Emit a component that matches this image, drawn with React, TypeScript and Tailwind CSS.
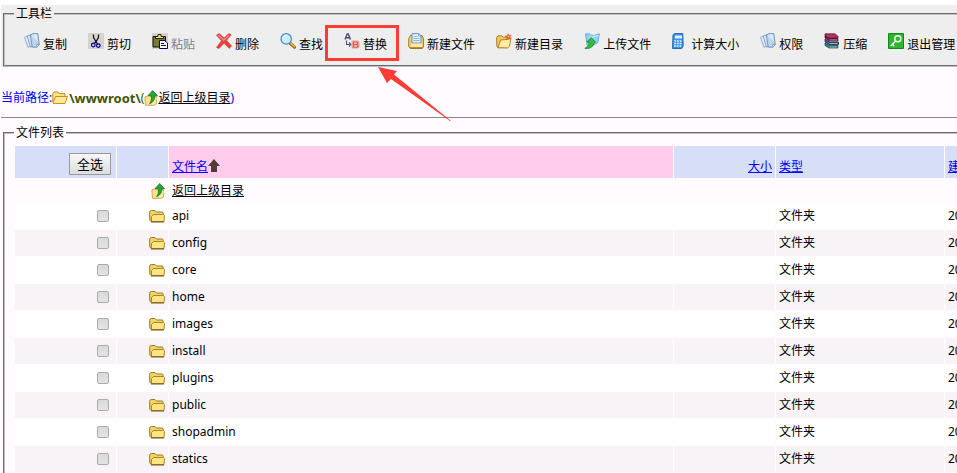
import React from "react";

const svgProps = { width: 16, height: 16, viewBox: "0 0 16 16", className: "block shrink-0", "aria-hidden": true } as const;

const CopyIcon = () => (
  <svg {...svgProps}>
    <path d="M.6 4.500 3.500 2.500l3 10-2.500 2z" fill="#e6eef8" stroke="#7f9cc0" strokeWidth=".8" />
    <path d="M3.200 3.500 7 1.500l2.500 11-3 1.800z" fill="#dbe7f5" stroke="#6f90b8" strokeWidth=".8" />
    <path d="M6.300 2 8.800.6h5l1.500 11-2.300 2.600H8.200z" fill="#bcd4ec" stroke="#5f82ae" strokeWidth=".8" />
    <path d="M8 3 9.500 1.500h3.500l.8 7z" fill="#dceaf7" />
    <path d="m15.300 11.600-2.800-.2.500 2.600z" fill="#f8fbfe" stroke="#5f82ae" strokeWidth=".6" />
  </svg>
);

const CutIcon = () => (
  <svg {...svgProps}>
    <path d="M0 0h16v16H0z" fill="#d6d3ce" />
    <path d="M5.500 1.500v3L8 8.500l1.500 2.500M10.500 1.500v3L8 8.500 6.500 10" fill="none" stroke="#111" strokeWidth="1.200" />
    <path d="M8 8v2" stroke="#00008b" />
    <circle cx="5.300" cy="12" r="1.800" fill="none" stroke="#00008b" strokeWidth="1.200" />
    <circle cx="10.300" cy="12.600" r="1.800" fill="none" stroke="#00008b" strokeWidth="1.200" />
  </svg>
);

const PasteIcon = () => (
  <svg {...svgProps}>
    <path d="M0 0h16v16H0z" fill="#d6d3ce" />
    <path d="M1 3.500h12.500v10.500H1z" fill="#7b7b39" stroke="#111" />
    <path d="M3.500 5.500v-2H6V1.600h3v1.900h2.500v2z" fill="#f1ec6c" stroke="#111" strokeWidth=".9" />
    <path d="M7.500 7.500h5l3 2.500v5.500h-8z" fill="#fff" stroke="#00007b" />
    <path d="M9 10.500h3M9 12.500h5" stroke="#00007b" />
  </svg>
);

const DeleteIcon = () => (
  <svg {...svgProps}>
    <path d="m.5 2.300 2.700-1.700L8 5 12.800.6l2.400 1.200-4.700 5.500 5.100 5.700-2.400 2.400L8 10.200l-5 5.400-2.500-1.200 5-6.600z" fill="#e5403c" stroke="#c03a3a" strokeWidth=".6" />
    <path d="M2.300 2.300 7.800 7.100l5.200-5" fill="none" stroke="#f59a96" strokeWidth="1.200" />
  </svg>
);

const FindIcon = () => (
  <svg {...svgProps}>
    <path d="m10 10 4.500 4.200" stroke="#9a6a14" strokeWidth="3.200" strokeLinecap="round" />
    <path d="m10.500 9.800 4 3.900" stroke="#f4b73c" strokeWidth="1.500" strokeLinecap="round" />
    <circle cx="6.200" cy="5.900" r="5.200" fill="#c6edfb" stroke="#3f86d0" strokeWidth="1.200" />
    <path d="M3 5.800A3.400 3.400 0 0 1 6.500 2.500" fill="none" stroke="#fff" strokeWidth="1.500" />
  </svg>
);

const ReplaceIcon = () => (
  <svg {...svgProps}>
    <path d="M1 6.500 3.200 1h1.100L6.500 6.500M2.200 4.800h3.300" fill="none" stroke="#454b74" strokeWidth="1.400" />
    <path d="M2.500 7.500v4h3.500M5 9.500l1.900 2L5 13.500" fill="none" stroke="#45587e" strokeWidth="1.100" />
    <path d="M7.500 7.500H14L15.500 9v5l-1.500 1.500H7.500z" fill="#efa090" />
    <path d="M9.500 9v5.300h3c2 0 2-2.700 0-2.700h-3 2.800c1.700 0 1.700-2.600 0-2.600z" fill="#f5c3b8" stroke="#cb6559" strokeWidth="1.100" />
  </svg>
);

const NewFileIcon = () => (
  <svg {...svgProps}>
    <path d="M.7 5.500 2.500 2.500H14l1.500 3.500v8l-1 1H2L.7 13.500z" fill="#f4cf6d" stroke="#ad7a23" />
    <path d="M4 .6h7L13 3v7H4z" fill="#e8f4ff" stroke="#4d87c7" strokeWidth=".9" />
    <path d="M10.500.6V3H13M5.500 3.500h4M5.500 5.500h6M5.500 7.500h6" fill="none" stroke="#6da5dc" strokeWidth=".8" />
    <path d="M3 10.500h11V14H3z" fill="#ffe9a2" />
    <path d="M2 15.200h12.500" stroke="#805716" />
  </svg>
);

const NewFolderIcon = () => (
  <svg {...svgProps}>
    <path d="M.6 4.500 1.800 2.800h4L7.200 4.200H12V13l-1.500 1.700H2L.8 13.500z" fill="#efc75c" stroke="#a4792a" strokeWidth=".9" />
    <path d="M2 14.700 4.500 7l8-.7 2.500-1.300-1.500 8.200-1.800 1.700z" fill="#ffec9f" stroke="#a4792a" strokeWidth=".9" />
    <path d="m12 0 1 2.200 2.700-.4-1.600 2.100 1 2.200-2.500-.7-2.200 1.500.2-2.500-2-1.300 2.500-.6z" fill="#ef4f24" />
    <circle cx="12.300" cy="3.500" r="1" fill="#ffe14e" />
  </svg>
);

const UploadIcon = () => (
  <svg {...svgProps}>
    <path d="M1.500.8h4l1.300 1.400 3 .4L15.500.8 13.500 10 9 12H3z" fill="#8fd2f6" stroke="#58a9dc" strokeWidth=".9" />
    <path d="M4 11 6 4l9-1.500" fill="none" stroke="#d1f1ff" />
    <path d="M7 4.500 11.500 9 9.700 10.400C9 14.500 5 16 .8 15.300 4 14 5 12 5 9.200L2.800 9z" fill="#38bb3d" stroke="#168225" strokeWidth=".8" />
  </svg>
);

const CalculatorIcon = () => (
  <svg {...svgProps}>
    <path d="M1 1.800 2.800.5h8l.4 12.500-1.500 2.500H.5z" fill="#3a91e3" stroke="#1762b1" strokeWidth=".9" />
    <path d="M3 2.500h7v3H2.800z" fill="#d8f3ff" />
    <path d="M2.300 8H9.800M2.200 10.500h7.500M2 13h7.500" stroke="#e3f5ff" strokeWidth="1.400" strokeDasharray="1.800 .9" />
  </svg>
);

const CompressIcon = () => (
  <svg {...svgProps}>
    <path d="M0 0h16v16H0z" fill="#f6f6f6" />
    <path d="M1 .8h10l3.500 3-1 1.200H5L1 3z" fill="#b73262" stroke="#3d1022" strokeWidth=".7" />
    <path d="m1 3 4 2.500h9V8H5L1 5z" fill="#7d1d42" stroke="#280a18" strokeWidth=".7" />
    <path d="m1 6 4 3h9.500v2.500H5L1 9z" fill="#4a50a4" stroke="#171733" strokeWidth=".7" />
    <path d="m1 10 4 2.500h9V15H5l-4-2.500z" fill="#2a8b7b" stroke="#0b3532" strokeWidth=".7" />
    <path d="M5.500 7h8M5.500 10.500h8M5.500 14h8" stroke="#dce8ea" strokeWidth=".6" />
  </svg>
);

const ExitIcon = () => (
  <svg {...svgProps}>
    <path d="M.5.5h15v15H.5z" fill="#2fb52f" stroke="#0b8a17" />
    <circle cx="9.800" cy="5.800" r="3" fill="none" stroke="#f4fff2" strokeWidth="1.500" />
    <path d="m7.700 8-5 5M4.300 11.300l1.800 1.800" stroke="#f4fff2" strokeWidth="1.500" />
  </svg>
);

const FolderIcon = () => (
  <svg {...svgProps}>
    <path d="M.6 4.500Q.8 2.500 2.200 2.500H6L7.500 4H13q1.200 0 1.200 1.500V12l-.7 1.500H2L.8 12z" fill="#f5d264" stroke="#9b7927" />
    <path d="M2.500 13.500v-5L4.500 6.500h10l1 1-.5 6z" fill="#fde584" stroke="#a8842c" />
    <path d="M2 14h13" stroke="#745718" />
  </svg>
);

const OpenFolderIcon = () => (
  <svg {...svgProps}>
    <path d="M.8 12V3.500L2 2h4l1.200 1.500H13V6" fill="#fbe08a" stroke="#c6911f" />
    <path d="m1 13 2.500-6.500h12L13 13.500H1.500z" fill="#ffe997" stroke="#c6911f" />
  </svg>
);

const UpIcon = () => (
  <svg {...svgProps} width="14" viewBox="0 0 14 16">
    <path d="M.8 7 5 5.500l2 1.300 5.500-.5V14L10 15.300H1.500z" fill="#fbe18a" stroke="#c39a3d" strokeWidth=".8" />
    <path d="M4 14 6 9l7-1-2 6.500z" fill="#ffedaa" />
    <path d="m8.700.5 4.800 5.200h-2.700c.2 4-1.700 6.800-5.300 8 1.700-2.400 2.200-4.700 1.800-8H4z" fill="#2ba532" stroke="#08701c" strokeWidth=".7" />
  </svg>
);

const tools = [
  { label: "复制", Icon: CopyIcon },
  { label: "剪切", Icon: CutIcon },
  { label: "粘贴", Icon: PasteIcon, disabled: true },
  { label: "删除", Icon: DeleteIcon },
  { label: "查找", Icon: FindIcon },
  { label: "替换", Icon: ReplaceIcon, highlighted: true },
  { label: "新建文件", Icon: NewFileIcon },
  { label: "新建目录", Icon: NewFolderIcon },
  { label: "上传文件", Icon: UploadIcon },
  { label: "计算大小", Icon: CalculatorIcon },
  { label: "权限", Icon: CopyIcon },
  { label: "压缩", Icon: CompressIcon },
  { label: "退出管理", Icon: ExitIcon },
];

const folders = ["api", "config", "core", "home", "images", "install", "plugins", "public", "shopadmin", "statics"];

function Highlight() {
  return (
    <span className="pointer-events-none absolute -left-[19px] -top-2 h-9 w-[74px] border-3 border-[#ff3b36]" aria-hidden="true">
      <svg className="absolute left-[50px] top-[39px]" width="74" height="56" viewBox="0 0 74 56">
        <path d="M0 0 19 4 16 7.500 73 54 72 54 13 12 9 16z" fill="#ff3b36" />
      </svg>
    </span>
  );
}

export default function App() {
  return (
    <div className="overflow-x-hidden bg-[#fffbff] font-['Noto_Sans','Noto_Sans_CJK_SC',sans-serif] text-xs leading-4 text-black">
      <div className="min-w-[1200px] border-t-5 border-white pl-px">
        <header className="bg-[#eee] pt-px pl-0.5">
          <fieldset className="border-2 border-[#c0c0c0] pb-3 pl-[19px] [border-style:groove]">
            <legend className="-ml-[10px] px-0.5">工具栏</legend>
            <div className="flex gap-[21px] pt-[11px] whitespace-nowrap">
              {tools.map(({ label, Icon, disabled, highlighted }) => (
                <button key={label} type="button" disabled={disabled} className="relative flex items-start gap-[3px] disabled:text-[#808080]">
                  <Icon />
                  <span className="pt-1">{label}</span>
                  {highlighted && <Highlight />}
                </button>
              ))}
            </div>
          </fieldset>
        </header>

        <nav className="flex items-center pt-[23px] pb-[11px] text-[#00f]" aria-label="当前路径">
          <span>当前路径:</span>
          <OpenFolderIcon />
          <strong className="pl-px text-[13px] text-[#3f5500]">\wwwroot\</strong>
          <span className="text-[#3f5500]">(</span>
          <UpIcon />
          <a href="#parent" className="text-black underline">返回上级目录</a>
          <span>)</span>
        </nav>
        <hr className="border-[#888]" />

        <fieldset className="mt-[7px] mr-1 ml-0.5 border-2 border-[#c0c0c0] px-[10px] pb-2 [border-style:groove]">
          <legend className="-ml-px px-0.5">文件列表</legend>
          <table className="mt-[5px] w-full table-fixed border-separate border-spacing-0">
            <colgroup>
              <col className="w-[102px]" />
              <col className="w-[52px]" />
              <col />
              <col className="w-[102px]" />
              <col className="w-[169px]" />
              <col className="w-[239px]" />
            </colgroup>
            <thead>
              <tr className="h-8 [&_a]:text-[#00f] [&_a]:underline [&>th]:border-r [&>th]:border-[#fffbff] [&>th]:bg-[#d6dff7] [&>th]:px-[3px] [&>th]:pb-[3px] [&>th]:align-bottom [&>th]:font-normal">
                <th className="text-right">
                  <button type="button" className="mr-0.5 block h-[22px] w-[42px] justify-self-end border border-[#999] bg-linear-to-b from-[#f8f8f8] to-[#ddd] text-[13px] leading-5">全选</button>
                </th>
                <th aria-label="图标" />
                <th className="bg-[#ffcceb]! text-left">
                  <span className="flex items-start">
                    <a href="#name">文件名</a>
                    <svg width="12" height="14" viewBox="0 0 12 14" aria-hidden="true"><path d="M6 0 12 7H9v6H3V7H0z" fill="#513a3a" /></svg>
                  </span>
                </th>
                <th className="text-right"><a href="#size">大小</a></th>
                <th className="text-left"><a href="#type">类型</a></th>
                <th className="text-left"><a href="#created">建立时间</a></th>
              </tr>
            </thead>
            <tbody>
              <tr className="h-[25px]">
                <td />
                <td><span className="flex justify-end pr-1"><UpIcon /></span></td>
                <td className="pl-[3px]"><a href="#parent" className="underline">返回上级目录</a></td>
                <td />
                <td />
                <td />
              </tr>
              {folders.map((name) => (
                <tr key={name} className="h-[27px] odd:bg-[#f7f3f7] even:bg-white [&>td]:border-r [&>td]:border-b [&>td]:border-[#fffbff] [&>td]:px-[3px]">
                  <td>
                    <span className="flex justify-end pr-1">
                      <input type="checkbox" aria-label={name} className="size-3 appearance-none rounded-xs border border-[#aaa] bg-linear-to-b from-[#d9d9d9] to-[#e4e4e4] checked:bg-[#3478c8]" />
                    </span>
                  </td>
                  <td><span className="flex justify-end"><FolderIcon /></span></td>
                  <td>{name}</td>
                  <td />
                  <td>文件夹</td>
                  <td>2015-12-08</td>
                </tr>
              ))}
            </tbody>
          </table>
        </fieldset>
      </div>
    </div>
  );
}
